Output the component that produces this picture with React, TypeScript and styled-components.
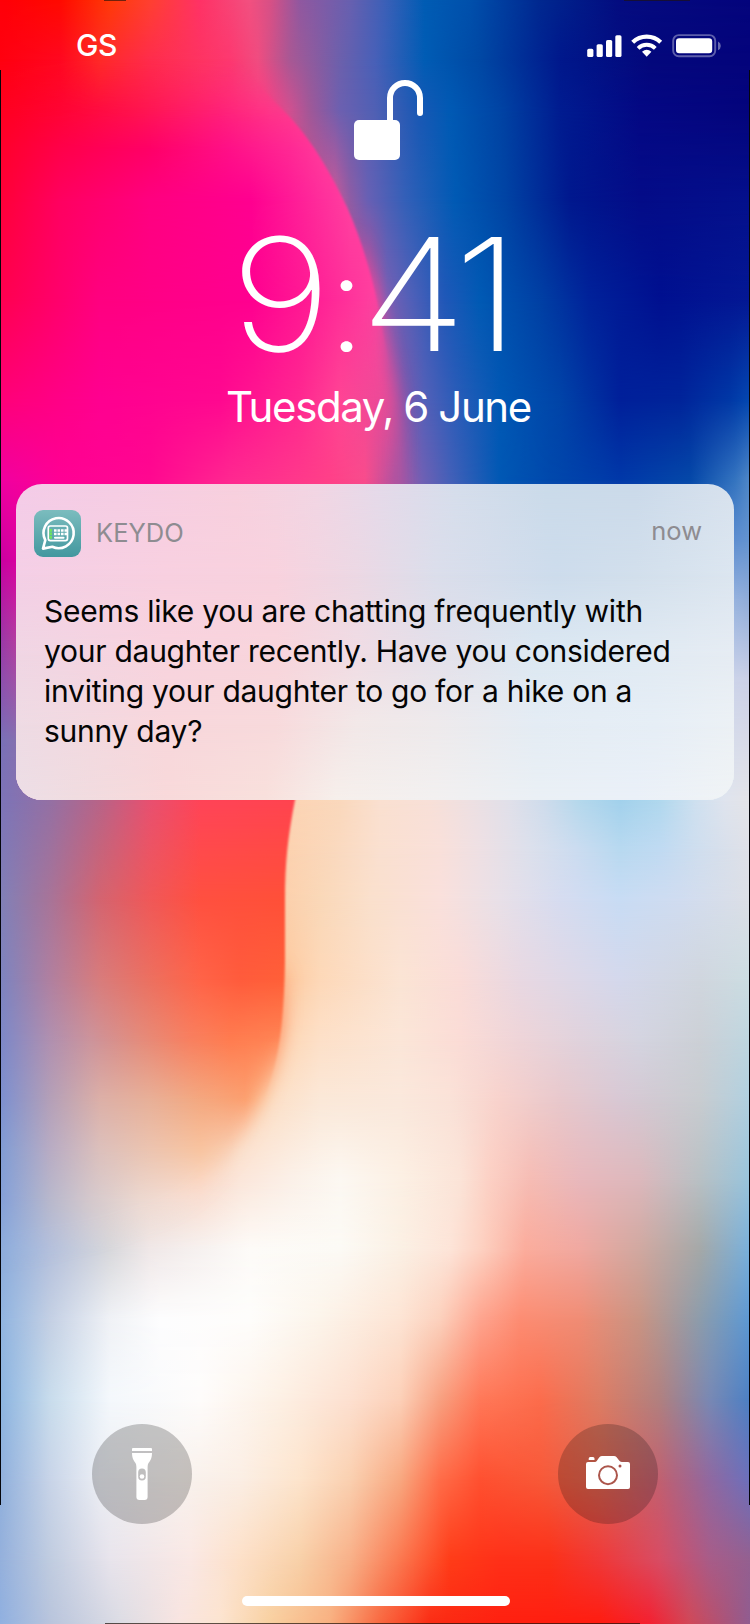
import React, { useId } from "react";
import styled, { createGlobalStyle } from "styled-components";

const GlobalStyle = createGlobalStyle`
  *, *::before, *::after { box-sizing: border-box; }
  html, body { margin: 0; padding: 0; background: #000; }
  body { font-family: Inter, "Liberation Sans", sans-serif; -webkit-font-smoothing: antialiased; }
`;

/* ---------- Wallpaper colours: rows of "x colour" stops at a height ---------- */

type Row = [number, string];

const rightRows: Row[] = [
  [0, "0 #ff0008,60 #ff0a00,110 #ff3a08,150 #ff4030,200 #ff3266,250 #f25080,270 #d85086,300 #9058a0,350 #6860b0,385 #3c60b8,425 #005cb4,470 #0050ac,540 #002890,620 #040c80,750 #04047c"],
  [60, "0 #ff0010,60 #ff0820,100 #ff2a28,150 #ff2c4c,230 #fd3870,258 #f04c80,290 #a85894,340 #6c60ac,375 #4860b8,425 #005cb4,480 #0048a4,560 #00188c,650 #04087c,750 #04047c"],
  [110, "0 #ff0020,80 #ff0838,150 #ff1850,230 #ff2c78,265 #ff3c84,290 #d05090,310 #a05898,340 #6c60b0,375 #5060b4,420 #1858b4,450 #005ab4,500 #0044a4,560 #001c90,640 #040884,750 #04047c"],
  [200, "0 #ff0038,335 #c85898,350 #905ca4,368 #6860b4,405 #3460b8,455 #005ab4,505 #0044a4,570 #00188e,640 #040c88,750 #04108c"],
  [300, "0 #ff0050,370 #c05098,387 #7860b4,412 #5060b8,445 #2058b8,480 #005ab4,540 #0040a4,590 #00229a,660 #001090,750 #041894"],
  [400, "0 #ff0078,375 #d85094,403 #8058ac,424 #5460b8,455 #2c5cb8,500 #0058b4,560 #0044a8,620 #00209a,680 #00249a,730 #0038a6,750 #0448b0"],
  [480, "0 #f000a0,330 #ff4088,365 #f84c8c,395 #b054a0,422 #7060b4,450 #4460b8,500 #0058b4,550 #0048ac,620 #0038a8,690 #0448a8,735 #3474c0,750 #5088c8"],
  [540, "0 #c800a0,400 #905ca0,730 #5c8cd0,750 #6494d0"],
  [600, "0 #c800a0,400 #c090a0,730 #98b4e0,750 #90acd8"],
  [680, "0 #9040a0,400 #f0c0b0,730 #ccd4ea,750 #ccd0e6"],
  [800, "0 #7c74b8,50 #9470a4,100 #b86488,150 #e85070,230 #fcd4b4,290 #fcd4b4,340 #fad8bc,380 #fae0d0,430 #f8e0d8,470 #eee0e2,510 #e0e0ea,545 #cedcec,580 #b4d8ec,620 #a2d1ec,660 #b0d8ee,695 #cee0f0,725 #dfe4ee,750 #e4e4e8"],
  [850, "0 #7e7ab8,50 #9e72a0,100 #c6647c,150 #ec5464,230 #fcd2b0,288 #fcd2b0,330 #fad8bc,380 #fae0d0,440 #f9e0da,480 #eee0e4,530 #dce0ec,575 #ccdcf0,620 #b8d9f0,660 #c0daf2,700 #d0deee,750 #e0e1e8"],
  [900, "0 #8080b8,50 #a87498,100 #d46470,150 #f05858,230 #fcd0ac,285 #fcd0ac,320 #fad8b8,370 #fae0cc,440 #fae0dc,500 #e8e0e8,560 #d6dcf0,620 #c8dcf4,680 #d0dcf0,750 #dcdfe6"],
  [980, "0 #7c84c0,50 #b080a0,100 #d87c7c,150 #ec7060,230 #fdc89c,282 #fdc89c,320 #fdd8b8,400 #fbe4d4,460 #fadcd8,520 #e8d8e2,620 #d4d8ec,700 #d0d6de,750 #ccdde2"],
  [1040, "0 #7c88c8,50 #b090b0,90 #cc949c,150 #e88c78,230 #fdd0ac,275 #fdd4b0,320 #fde0c8,400 #fbe6d8,460 #fbdcd6,520 #eed4d8,580 #e0d2dc,640 #d4d4e0,700 #ccd0d6,750 #bed6e0"],
  [1100, "0 #7c90d0,50 #b4a0b8,100 #dcb0a8,150 #e8b098,230 #fcd8b8,275 #fce0c8,320 #fbe8d8,400 #fae8dc,450 #fae2d8,500 #f8d2cc,560 #e8c8cc,620 #d8c8d4,700 #c8ccd0,750 #b0d0e0"],
  [1180, "0 #829ed6,50 #b8b4ca,90 #d6c6c8,150 #edd2c4,200 #fad8c8,240 #fbe6da,290 #fbf0e8,340 #fcf8f2,400 #fcf0e4,460 #fbe4d8,490 #fcd0c4,530 #f6bcb4,580 #e8b8bc,640 #dcb8bc,700 #b8c0c4,750 #98c4dc"],
  [1250, "0 #8cacdc,50 #b4c0dc,110 #d8d8dc,150 #f0e8e8,250 #fdfbf8,340 #fcfaf5,400 #fbf0e4,450 #fde4d8,482 #fdd0c0,525 #fbac9c,580 #f0a8a0,640 #d0a8a0,700 #a4a8a8,750 #78b0dc"],
  [1320, "0 #90b4e0,50 #c4d0e4,110 #f0f2f6,160 #fdfdfe,250 #fefdfb,320 #fcf4ea,400 #fde4d4,440 #fcd0bc,480 #fea48e,520 #fd8c72,580 #f08c74,640 #c89484,700 #8c9cac,750 #5c98d4"],
  [1400, "0 #8cb4e0,50 #c8dcec,110 #f4f8fc,200 #fefcfb,280 #fdf0e4,350 #fde0d0,400 #fcd0b8,440 #f8a080,480 #ff7858,540 #fc6c4c,600 #dc7c64,660 #b08080,710 #7888b4,750 #4c80c4"],
  [1480, "0 #90b0dc,50 #c8d4e8,100 #eceef4,180 #f8f2ee,240 #fbeee4,300 #fde4cc,350 #fad0b0,400 #f8a880,440 #ff6c48,480 #ff5030,540 #f85838,600 #e06450,660 #c06070,710 #9068a0,750 #6c70bc"],
  [1560, "0 #94b0dc,50 #c0cce0,110 #e8e4ec,190 #fae8e4,240 #fde0c8,300 #f8d0a8,350 #f8b088,400 #fb7850,450 #ff3c18,500 #ff3018,550 #fc3018,600 #f03838,660 #d84c64,710 #a85c88,750 #946090"],
  [1624, "0 #90b0e0,50 #b8c4dc,120 #dcdce4,180 #f8e4e0,220 #fce4d0,270 #f8d0a0,330 #f8b080,380 #f86840,430 #fb2c14,500 #ff2010,600 #ff1c10,650 #f42030,690 #d04858,750 #905c90"],
];

const leftRows: Row[] = [
  [60, "0 #ff0010,60 #ff0820,100 #ff2a28,150 #ff2c4c,230 #fd3870,258 #f04c80,750 #f04c80"],
  [110, "0 #ff0020,60 #ff0434,140 #ff1450,220 #ff2078,270 #ff3488,300 #ff3c90,750 #ff3c90"],
  [150, "0 #ff002c,60 #ff004a,150 #ff0068,230 #ff1088,290 #ff2894,325 #ff3c9c,750 #ff3c9c"],
  [200, "0 #ff0038,60 #ff0060,150 #ff0080,250 #ff0090,300 #ff2098,350 #ff40a0,750 #ff40a0"],
  [300, "0 #ff0050,100 #ff0080,250 #ff0090,310 #ff1c94,380 #ff44a0,750 #ff44a0"],
  [400, "0 #ff0078,100 #ff0090,220 #ff0890,300 #ff2890,340 #ff4494,390 #e84c98,750 #e84c98"],
  [480, "0 #f000a0,60 #ff0094,150 #ff0890,230 #ff2890,330 #ff4088,365 #f84c8c,395 #b054a0,750 #b054a0"],
  [560, "0 #c800a0,16 #d800a0,100 #ff0090,300 #ff3080,750 #ff3080"],
  [640, "0 #9838a8,16 #b43ca0,100 #f03080,300 #ff4070,750 #ff4070"],
  [740, "0 #7870b8,16 #8470b0,100 #c05c8c,200 #ff4460,750 #ff4460"],
  [800, "0 #7c74b8,50 #9470a4,100 #b86488,150 #e85070,200 #ff4458,290 #ff4450,750 #ff4450"],
  [900, "0 #8080b8,50 #a87498,100 #d46470,150 #f05858,200 #ff5040,285 #ff5038,750 #ff5038"],
  [980, "0 #7c84c0,50 #b080a0,100 #d87c7c,150 #ec7060,200 #ff6448,240 #ff5c3c,285 #ff6038,750 #ff6038"],
  [1040, "0 #7c88c8,50 #b090b0,90 #cc949c,140 #e48c7c,190 #f88060,230 #ff7c50,280 #ff8454,750 #ff8454"],
  [1100, "0 #7c90d0,50 #b4a0b8,100 #dcb0a8,150 #e8b098,200 #f4a880,245 #fca070,275 #fcb888,750 #fcc8a0"],
  [1150, "0 #809cd4,50 #b8acc4,100 #dcc0bc,150 #ecc4b0,200 #f8c4a0,230 #f8ccb0,260 #fbe0cc,750 #fbe0cc"],
  [1200, "0 #84a0d8,50 #b8b8cc,90 #d4c8cc,140 #ecd8d0,200 #fbe0d4,240 #fbece0,300 #fcf8f2,750 #fcf8f2"],
  [1250, "0 #8cacdc,50 #b4c0dc,110 #d8d8dc,150 #f0e8e8,250 #fdfbf8,340 #fcfaf5,750 #fcfaf5"],
];

const cardRows: Row[] = [
  [0, "0 #f4cce8,100 #f6cde4,220 #f8d0de,300 #f2d6e4,360 #e6daea,440 #d6deec,530 #cbdbea,620 #cbdaea,718 #d8e2ee"],
  [90, "0 #f4cfe6,150 #f8d0e0,260 #f8d2de,340 #ecd8e4,420 #dbdeeb,540 #cddcec,620 #d2dfec,718 #dce6f0"],
  [170, "0 #f0d6e4,150 #f8d3de,260 #f8d5dc,340 #f0dce4,420 #e4e0ea,520 #dce8f2,620 #e0eaf3,718 #e6ecf3"],
  [240, "0 #eedbe4,150 #f8d7dc,260 #f8dadc,340 #f2e8e8,420 #eeeaec,520 #e4ecf4,640 #e6eef6,718 #ecf1f5"],
  [316, "0 #ecdee6,60 #f0dce0,150 #f8d9da,250 #f8e0dc,320 #f6efeb,420 #f2f0f0,520 #eaf0f5,620 #eaf0f8,718 #f0f3f5"],
];

function GradientMesh({ rows, width, height, mask }: { rows: Row[]; width: number; height: number; mask?: string }) {
  const id = useId().replace(/[^a-zA-Z0-9]/g, "");
  return (
    <g mask={mask}>
      <defs>
        {rows.map(([y, stops], i) => (
          <React.Fragment key={y}>
            <linearGradient id={`${id}c${i}`} gradientUnits="userSpaceOnUse" x1="0" y1="0" x2={width} y2="0">
              {stops.split(",").map((stop) => {
                const [x, color] = stop.split(" ");
                return <stop key={x} offset={Number(x) / width} stopColor={color} />;
              })}
            </linearGradient>
            {i > 0 && (
              <>
                <linearGradient id={`${id}f${i}`} gradientUnits="userSpaceOnUse" x1="0" y1={rows[i - 1][0]} x2="0" y2={y}>
                  <stop offset="0" stopColor="#fff" stopOpacity="0" />
                  <stop offset="1" stopColor="#fff" />
                </linearGradient>
                <mask id={`${id}m${i}`} maskUnits="userSpaceOnUse" x="0" y="0" width={width} height={height}>
                  <rect width={width} height={height} fill={`url(#${id}f${i})`} />
                </mask>
              </>
            )}
          </React.Fragment>
        ))}
      </defs>
      {rows.map(([y], i) => (
        <rect
          key={y}
          y={i ? rows[i - 1][0] : 0}
          width={width}
          height={height - (i ? rows[i - 1][0] : 0)}
          fill={`url(#${id}c${i})`}
          mask={i ? `url(#${id}m${i})` : undefined}
        />
      ))}
    </g>
  );
}

const petal =
  "M-60 40H225C250 76 266 92 280 107C312 137 333 178 347 207C366 250 376 292 383 333C389 365 398 400 398 440V600C398 690 308 720 295 800C288 836 285 862 285 900V962C284 1020 279 1062 264 1098C250 1134 228 1168 190 1200C155 1226 60 1250 -60 1260Z";

function WallpaperArt() {
  return (
    <svg width="750" height="1624" viewBox="0 0 750 1624">
      <defs>
        <filter id="crisp" filterUnits="userSpaceOnUse" x="-80" y="0" width="900" height="1300"><feGaussianBlur stdDeviation="1" /></filter>
        <filter id="soft" filterUnits="userSpaceOnUse" x="-80" y="0" width="900" height="1300"><feGaussianBlur stdDeviation="9" /></filter>
        <linearGradient id="crispFade" gradientUnits="userSpaceOnUse" x1="0" y1="0" x2="0" y2="1300">
          <stop offset={60 / 1300} stopColor="#fff" stopOpacity="0" />
          <stop offset={120 / 1300} stopColor="#fff" />
          <stop offset={290 / 1300} stopColor="#fff" />
          <stop offset={370 / 1300} stopColor="#fff" stopOpacity="0" />
          <stop offset={520 / 1300} stopColor="#fff" stopOpacity="0" />
          <stop offset={600 / 1300} stopColor="#fff" />
          <stop offset={1030 / 1300} stopColor="#fff" />
          <stop offset={1100 / 1300} stopColor="#fff" stopOpacity="0" />
        </linearGradient>
        <linearGradient id="softFade" gradientUnits="userSpaceOnUse" x1="0" y1="0" x2="0" y2="1300">
          <stop offset={230 / 1300} stopColor="#fff" stopOpacity="0" />
          <stop offset={290 / 1300} stopColor="#fff" />
          <stop offset={620 / 1300} stopColor="#fff" />
          <stop offset={700 / 1300} stopColor="#fff" stopOpacity="0" />
          <stop offset={960 / 1300} stopColor="#fff" stopOpacity="0" />
          <stop offset={1030 / 1300} stopColor="#fff" />
        </linearGradient>
        <mask id="petalMask" maskUnits="userSpaceOnUse" x="0" y="0" width="750" height="1624">
          <path d={petal} fill="url(#crispFade)" filter="url(#crisp)" />
          <path d={petal} fill="url(#softFade)" filter="url(#soft)" />
        </mask>
      </defs>
      <GradientMesh rows={rightRows} width={750} height={1624} />
      <GradientMesh rows={leftRows} width={750} height={1624} mask="url(#petalMask)" />
      <path d="M.5 70V1505M749.5 70V1505" stroke="#05060c" />
      <path d="M104 .3H126M624 .3H690M105 1623.6H640" stroke="#20140c" strokeOpacity=".8" />
    </svg>
  );
}

/* ---------- Layout ---------- */

const Screen = styled.main`
  position: relative;
  isolation: isolate;
  display: flex;
  flex-direction: column;
  width: 750px;
  height: 1624px;
  overflow: hidden;
  color: #fff;
`;

const Backdrop = styled.div`
  position: absolute;
  inset: 0;
  z-index: -1;
  overflow: hidden;
  border-radius: inherit;
  svg { display: block; }
`;

const StatusBar = styled.header`
  display: flex;
  justify-content: space-between;
  align-items: center;
  height: 92px;
  padding: 0 29px 0 76px;
`;

const Carrier = styled.span`
  margin-top: -2px;
  font-size: 30px;
  font-weight: 540;
  letter-spacing: -0.4px;
`;

const LockRow = styled.div`
  display: flex;
  justify-content: center;
  height: 88px;
  padding: 0 0 0 25px;
  margin-top: -14px;
`;

const Clock = styled.time`
  display: flex;
  align-items: baseline;
  height: 140px;
  margin-top: 58px;
  padding-left: 231.5px;
  font-size: 157px;
  font-weight: 160;
  line-height: 140px;
  letter-spacing: -9px;
  font-feature-settings: "calt" 0;
  white-space: nowrap;
  transform: scaleX(1.1);
  transform-origin: 242px 50%;
`;

const Colon = styled.span`
  margin: 0 3px 0 4px;
  font-size: 0.87em;
`;

const DateLine = styled.div`
  height: 50px;
  margin-top: 18px;
  padding-left: 226px;
  font-size: 42px;
  line-height: 50px;
  letter-spacing: -1.4px;
  white-space: nowrap;
`;

const Card = styled.article`
  position: relative;
  isolation: isolate;
  height: 316px;
  margin: 52px 16px 0;
  padding: 26px 32px 0 18px;
  border-radius: 26px;
`;

const CardHeader = styled.div`
  display: flex;
  align-items: center;
  height: 47px;
  color: #8e8c91;
`;

const AppName = styled.span`
  margin: -2px 0 0 15px;
  font-size: 25.5px;
`;

const When = styled.span`
  margin: -6px 0 0 auto;
  font-size: 25.5px;
`;

const Message = styled.p`
  margin: 34px 0 0 10px;
  color: #050505;
  font-size: 30px;
  line-height: 40px;
  letter-spacing: -0.26px;
  white-space: nowrap;
`;

const Actions = styled.footer`
  display: flex;
  justify-content: space-between;
  margin-top: auto;
  padding: 0 92px 72px;
`;

const RoundButton = styled.button`
  width: 100px;
  height: 100px;
  padding: 0;
  border: 0;
  border-radius: 50%;
  background: rgba(10, 10, 10, 0.22);
  svg { display: block; }
`;

const HomeIndicator = styled.div`
  width: 268px;
  height: 10px;
  margin: 0 0 18px 242px;
  border-radius: 5px;
  background: #fff;
`;

/* ---------- Icons ---------- */

const StatusIcons = () => (
  <svg width="136" height="26" viewBox="585 33 136 26" fill="#fff">
    <rect x="587.2" y="48.8" width="6.2" height="8.2" rx="1.6" />
    <rect x="596.6" y="44.2" width="6.2" height="12.8" rx="1.6" />
    <rect x="606" y="40" width="6.2" height="17" rx="1.6" />
    <rect x="615.3" y="35.2" width="6.2" height="21.8" rx="1.6" />
    <g fill="none" stroke="#fff">
      <path d="M632.7 42.2A20.2 20.2 0 0 1 660.7 42.2" strokeWidth="4.2" />
      <path d="M638.1 48.3A12.3 12.3 0 0 1 655.3 48.3" strokeWidth="3.9" />
    </g>
    <path d="M642 51.7Q646.7 48 651.4 51.7L646.7 56.7Z" />
    <rect x="673.2" y="35.1" width="42" height="21.2" rx="5.6" fill="none" stroke="#fff" strokeOpacity=".36" strokeWidth="1.9" />
    <rect x="676" y="38.2" width="36.2" height="15" rx="3.2" />
    <path d="M718 41.6Q720.8 43 720.8 45.9T718 50.2Z" fillOpacity=".4" />
  </svg>
);

const UnlockedIcon = () => (
  <svg width="72" height="84" viewBox="352 78 72 84">
    <rect x="354" y="120" width="46" height="40" rx="5" fill="#fff" />
    <path d="M390 123V98a15 15 0 0 1 30 0V113" fill="none" stroke="#fff" strokeWidth="6" strokeLinecap="round" />
  </svg>
);

const KeydoIcon = () => (
  <svg width="47" height="47" viewBox="0 0 47 47">
    <defs>
      <linearGradient id="keydo" x1="0" y1="0" x2="0" y2="1">
        <stop offset="0" stopColor="#7bbcbe" />
        <stop offset="1" stopColor="#43989f" />
      </linearGradient>
    </defs>
    <rect width="47" height="47" rx="9" fill="url(#keydo)" />
    <path d="M11.3 30.2A15.1 15.1 0 1 1 18.3 36.8L9 38.6Z" fill="none" stroke="#fff" strokeWidth="2.6" strokeLinejoin="round" />
    <rect x="14.3" y="16" width="19.2" height="14.6" rx="2" fill="none" stroke="#fff" strokeWidth="1.7" />
    <path d="M16.7 18.9V29" stroke="#6ee45c" strokeWidth="2.5" strokeDasharray="2.8 .7" />
    <path d="M20 20.5H33M20 24H33" stroke="#fff" strokeWidth="2.5" strokeDasharray="2.6 .9" />
    <path d="M21 27.7H29.5" stroke="#fff" strokeWidth="2.1" strokeLinecap="round" />
  </svg>
);

const FlashlightIcon = () => (
  <svg width="100" height="100" viewBox="92 1424 100 100">
    <path
      fill="#fff"
      fillRule="evenodd"
      d="M132 1451V1449Q132 1448 133 1448H151Q152 1448 152 1449V1451ZM132 1453H152C152 1459 149.5 1461.5 148.5 1463Q147.6 1464.5 147.6 1467V1497Q147.6 1500 144.6 1500H139.4Q136.4 1500 136.4 1497V1467Q136.4 1464.5 135.5 1463C134.5 1461.5 132 1459 132 1453ZM142 1468.5A3.8 3.8 0 0 0 138.2 1472.3V1476.7A3.8 3.8 0 0 0 145.8 1476.7V1472.3A3.8 3.8 0 0 0 142 1468.5Z"
    />
    <circle cx="142" cy="1476.5" r="2.3" fill="#fff" />
  </svg>
);

const CameraIcon = () => (
  <svg width="100" height="100" viewBox="558 1424 100 100">
    <path
      fill="#fff"
      d="M588 1462H595C598 1462 598 1456 602 1456H614C618 1456 618 1462 622 1462H628Q630 1462 630 1464V1487Q630 1489 628 1489H588Q586 1489 586 1487V1464Q586 1462 588 1462ZM588.7 1460V1458.5Q588.7 1457 590.2 1457H593Q594.5 1457 594.5 1458.5V1460Z"
    />
    <circle cx="608" cy="1475.2" r="9" fill="none" stroke="#ac564c" strokeWidth="2" />
    <circle cx="620" cy="1466" r="1.5" fill="#a8504a" />
  </svg>
);

export default function App() {
  return (
    <>
      <GlobalStyle />
      <Screen>
        <Backdrop><WallpaperArt /></Backdrop>
        <StatusBar>
          <Carrier>GS</Carrier>
          <StatusIcons />
        </StatusBar>
        <LockRow><UnlockedIcon /></LockRow>
        <Clock>9<Colon>:</Colon>41</Clock>
        <DateLine>Tuesday, 6 June</DateLine>
        <Card>
          <Backdrop>
            <svg width="718" height="316"><GradientMesh rows={cardRows} width={718} height={316} /></svg>
          </Backdrop>
          <CardHeader>
            <KeydoIcon />
            <AppName>KEYDO</AppName>
            <When>now</When>
          </CardHeader>
          <Message>
            Seems like you are chatting frequently with<br />
            your daughter recently. Have you considered<br />
            inviting your daughter to go for a hike on a<br />
            sunny day?
          </Message>
        </Card>
        <Actions>
          <RoundButton aria-label="Flashlight"><FlashlightIcon /></RoundButton>
          <RoundButton aria-label="Camera"><CameraIcon /></RoundButton>
        </Actions>
        <HomeIndicator />
      </Screen>
    </>
  );
}
